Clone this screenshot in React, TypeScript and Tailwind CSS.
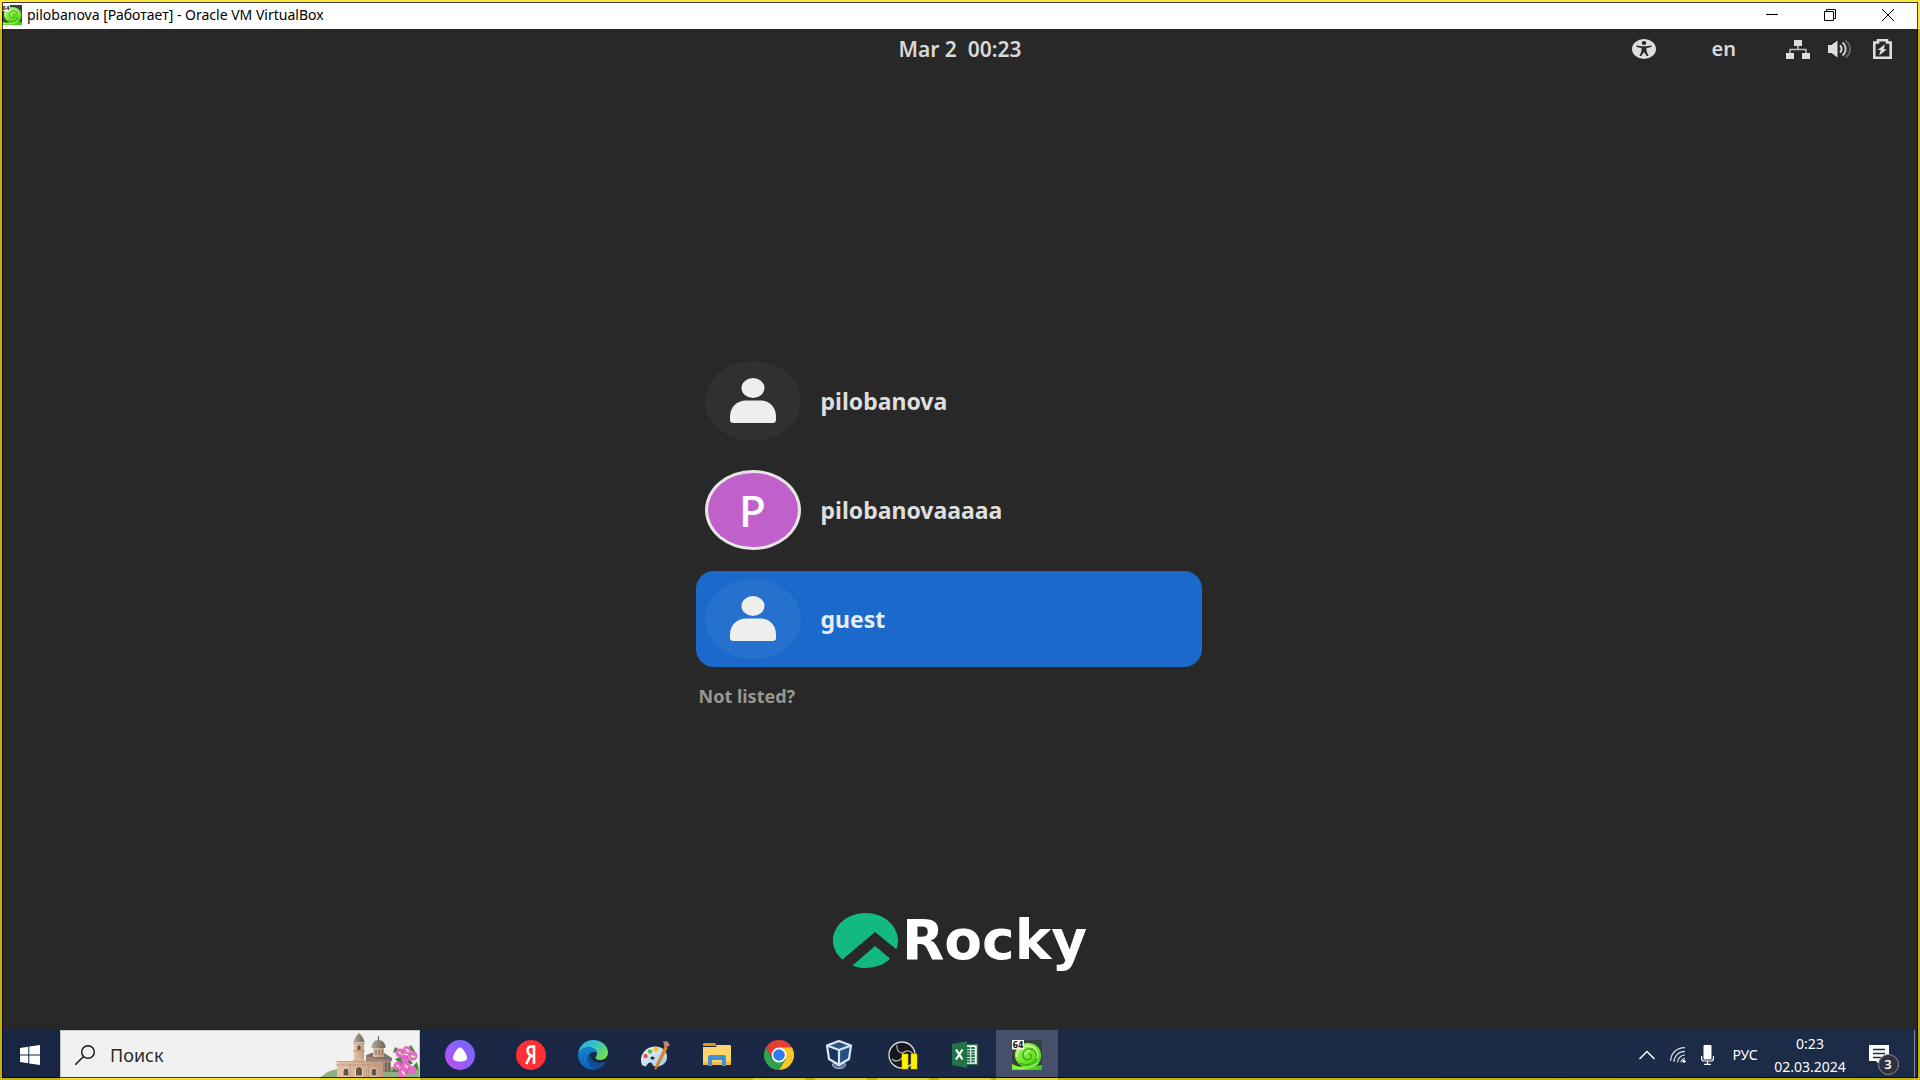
import type { ReactNode } from "react";

const UI = "font-['Noto_Sans','Open_Sans',sans-serif]";

function VmIcon({ id, className }: { id: string; className: string }) {
  return (
    <svg viewBox="0 0 30 30" className={className} aria-hidden="true">
      <defs>
        <linearGradient id={id} x1="0" y1="0" x2="1" y2="1">
          <stop offset="0" stopColor="#c4f88a" />
          <stop offset="0.5" stopColor="#72e62e" />
          <stop offset="1" stopColor="#3fc41a" />
        </linearGradient>
      </defs>
      <rect width="30" height="30" fill="#36403f" />
      <path d="M3 17C2 8 9 3 16 3c8 0 14 6 13 14-.4 4-2 7-5 9l6-1v5H0v-6c4 2 8 3 11 2-5-2-7-5-8-9Z" fill={`url(#${id})`} />
      <path d="M8 23c5 3 12 2 15-2 3-5 1-11-4-12-5-1-9 3-8 7 1 4 6 5 8 2 1-2 0-4-2-4" fill="none" stroke="#3aa81c" strokeWidth="1.300" />
      <path d="M5 17c-1-7 5-12 12-11 6 1 10 6 8 12M13 15c0-3 3-5 5-4" fill="none" stroke="#d2fb9f" strokeWidth="1.300" />
      <path d="M1 27c8 2 17 2 25-4" fill="none" stroke="#a8f060" strokeWidth="1.400" />
      <rect x="0" y="0" width="12" height="9.500" fill="#f8f8f8" />
      <text x="6" y="7.700" textAnchor="middle" fontSize="8" fontWeight="700" fontFamily="DejaVu Sans, sans-serif" fill="#222">64</text>
    </svg>
  );
}

function Person() {
  return (
    <svg viewBox="0 0 96 80" className="h-20 w-24" aria-hidden="true" fill="#eeeeec">
      <ellipse cx="48" cy="27" rx="11.500" ry="10" />
      <path d="M25 59V55.500C25 46 32 39.500 41 39.500H55C64 39.500 71 46 71 55.500V59Q71 62 67.500 62H28.500Q25 62 25 59Z" />
    </svg>
  );
}

function User({ name, selected, letter }: { name: string; selected?: boolean; letter?: string }) {
  return (
    <li>
      <button
        type="button"
        className={`flex w-full items-center gap-5 rounded-[18px] px-[9px] py-2 text-left ${selected ? "bg-[#1b6acb]" : ""}`}
      >
        {letter ? (
          <span className="flex h-20 w-24 items-center justify-center rounded-[50%] border-[3px] border-[#e6e6e4] bg-[#c061cb] text-[44px] leading-none font-medium text-white">
            {letter}
          </span>
        ) : (
          <span className={`h-20 w-24 rounded-[50%] ${selected ? "bg-[#2671ce]" : "bg-[#303030]"}`}>
            <Person />
          </span>
        )}
        <span className={`text-[23px] leading-8 font-bold ${selected ? "text-[#e8eef8]" : "text-[#dededd]"}`}>{name}</span>
      </button>
    </li>
  );
}

function TitleBar() {
  const btn = "flex h-full w-[58px] items-center justify-center";
  return (
    <header className={`flex h-[29px] shrink-0 items-center bg-white pr-[3px] pl-[2px] text-black ${UI}`}>
      <VmIcon id="vmSmall" className="mr-[5px] h-5 w-5" />
      <h1 className="flex-1 text-[14px] leading-5">pilobanova [Работает] - Oracle VM VirtualBox</h1>
      <button type="button" aria-label="Minimize" className={btn}>
        <svg width="12" height="12" viewBox="0 0 12 12" stroke="#000" aria-hidden="true"><path d="M0 5.500H12" /></svg>
      </button>
      <button type="button" aria-label="Restore" className={btn}>
        <svg width="12" height="12" viewBox="0 0 12 12" stroke="#000" fill="none" aria-hidden="true">
          <path d="M.5 2.500h9v9h-9zM2.500 2.500V.5h9v9h-2" />
        </svg>
      </button>
      <button type="button" aria-label="Close" className={btn}>
        <svg width="12" height="12" viewBox="0 0 12 12" stroke="#000" aria-hidden="true"><path d="M0 0 12 12M12 0 0 12" /></svg>
      </button>
    </header>
  );
}

function TopPanel() {
  return (
    <div className="grid h-10 shrink-0 grid-cols-3 items-center px-7 text-[20px] leading-6 font-semibold text-[#d8d8d8]">
      <time className="col-start-2 justify-self-center text-[21px] whitespace-pre">Mar 2  00:23</time>
      <div className="flex items-center justify-end">
        <button type="button" aria-label="Accessibility" className="mr-14">
          <svg width="24" height="20" viewBox="0 0 24 20" aria-hidden="true">
            <ellipse cx="12" cy="10" rx="12" ry="10" fill="#dedede" />
            <g fill="#282828">
              <ellipse cx="12" cy="4" rx="2.300" ry="1.900" />
              <path d="M4.500 6.400 10 7.200h4l5.500-.8v1.500L14.500 9v3l2 5h-1.800L12 13l-2.700 4H7.500l2-5V9l-5-1.100Z" />
            </g>
          </svg>
        </button>
        <button type="button" className="mr-[50px]">en</button>
        <button type="button" aria-label="System menu" className="flex items-center">
          <svg width="24" height="20" viewBox="0 0 24 20" className="mr-[18px]" fill="#dedede" aria-hidden="true">
            <path d="M8 1h8v6h-8zM0 14h8v6H0zM16 14h8v6h-8z" />
            <path d="M12 7v3.500M4 14v-3.500h16V14" fill="none" stroke="#bdbdbd" strokeWidth="1.500" />
          </svg>
          <svg width="24" height="20" viewBox="0 0 24 20" className="mr-[21px]" fill="none" aria-hidden="true">
            <path d="M0 6h3.500L9.500 1.500v17L3.500 14H0z" fill="#dedede" />
            <path d="M12 6.500c2.200 2 2.200 5 0 7" stroke="#dedede" strokeWidth="2" />
            <path d="M14.500 3.500c4.200 3.500 4.200 9.500 0 13" stroke="#c4c4c4" strokeWidth="2" />
            <path d="M17.500 1.500c6 4.500 6 12.500 0 17" stroke="#626262" strokeWidth="2" />
          </svg>
          <svg width="19" height="20" viewBox="0 0 19 20" fill="none" aria-hidden="true">
            <path d="M1.300 3.500H5V1.300h9v2.200h3.700v15.200H1.300z" stroke="#dedede" strokeWidth="2.600" />
            <path d="M12 5.200 4.500 11h3.300L6 16.500l8-6.300h-3.300z" fill="#dedede" />
          </svg>
        </button>
      </div>
    </div>
  );
}

function RockyLogo() {
  return (
    <div className="flex items-center justify-center gap-1">
      <svg width="65" height="55" viewBox="0 0 65 55" aria-hidden="true" fill="#13b981">
        <path d="M9.500 46.500C3.500 41.500 0 35 0 27.500 0 12.500 14.500 0 32.500 0S65 12.500 65 27.500c0 3.200-.6 6-1.700 8.700L42 19Z" />
        <path d="M19.500 52.400 42 33l15 12.500C51.500 51.500 42 55 32.500 55c-4.700 0-9-.9-13-2.600Z" />
      </svg>
      <span className="font-['DejaVu_Sans',sans-serif] text-[55px] leading-[58px] font-bold text-white">Rocky</span>
    </div>
  );
}

function SearchArt() {
  return (
    <svg width="100" height="47" viewBox="0 0 100 47" aria-hidden="true">
      <defs>
        <linearGradient id="stone" x1="0" y1="0" x2="1" y2="0">
          <stop offset="0" stopColor="#e6c4a6" /><stop offset="1" stopColor="#c39a82" />
        </linearGradient>
        <linearGradient id="dome" x1="0" y1="0" x2="1" y2="0">
          <stop offset="0" stopColor="#b3aca0" /><stop offset="1" stopColor="#6b645c" />
        </linearGradient>
      </defs>
      <path d="M0 47c10-11 23-13 42-8 24-6 44-5 58-1v9Z" fill="#8fae82" />
      <path d="M47 24h16l9 3v13H47Z" fill="#9b8677" />
      <path d="M46 24 52 21h13l8 5v3Z" fill="#7b716a" />
      <path d="M54 15h11v10H54Z" fill="url(#stone)" />
      <path d="M52.500 16c0-5 3-8 7-8s7 3 7 8Z" fill="url(#dome)" />
      <path d="M59.500 4v5M57 18v5M60 18v5M63 18v5" stroke="#80705f" strokeWidth="1.200" />
      <path d="M35 11h10v19H35Z" fill="url(#stone)" />
      <path d="M34.500 10c1-4 3-7 5.500-9 2.500 2 4.500 5 5.500 9Z" fill="url(#dome)" />
      <path d="M34 11h12M34 19h12" stroke="#b8977c" strokeWidth="1" />
      <path d="M38.500 18v-3a1.500 1.500 0 0 1 3 0v3Z" fill="#69503f" />
      <path d="M18 30h46v16H18Z" fill="url(#stone)" />
      <path d="M17 29.500h48M31 32v14M50 32v14M17 33h48M16 45.500h50" stroke="#b8937a" strokeWidth=".8" />
      <path d="M33 29l7-4 7 4Z" fill="#dcb598" />
      <path d="M24 44v-5a3 3 0 0 1 6 0v5ZM36.500 44v-6a3.500 3.500 0 0 1 7 0v6ZM52 44v-5a3 3 0 0 1 6 0v5Z" fill="#66554a" stroke="#f2d7ba" />
      <path d="M67 31v9M70 31v9" stroke="#6f5b4d" strokeWidth="1.500" />
      <g fill="#45892f">
        <path d="m74 21 2-6 5 3ZM88 17l4-4 5 8ZM72 40l5-7 5 7ZM92 36l6-6 2 8ZM76 27l10-4 8 8-8 5Z" />
      </g>
      <g fill="#e56ad0">
        <circle cx="81" cy="21" r="4.500" /><circle cx="88" cy="18" r="4" /><circle cx="94" cy="24" r="4.500" />
        <circle cx="86" cy="27" r="4" /><circle cx="79" cy="34" r="4.500" /><circle cx="87" cy="34" r="4.500" />
        <circle cx="93" cy="38" r="4" /><circle cx="84" cy="41" r="5" />
      </g>
      <path d="m80 20 3 3M87 17l3 3M92 24l4 1M78 33l3 3M86 33l3 3M83 39l3 4" stroke="#fae7a4" strokeWidth="2" />
      <path d="m84 17-3 7M91 20l-4 7M83 31l-5 7M91 34l-4 8" stroke="#c246aa" strokeWidth=".8" />
    </svg>
  );
}

const icons: { label: string; running?: boolean; active?: boolean; art: ReactNode }[] = [
  {
    label: "Yandex",
    art: (
      <svg viewBox="0 0 30 30" className="h-[30px] w-[30px]" aria-hidden="true">
        <circle cx="15" cy="15" r="15" fill="#fc3035" />
        <path d="M18 24V6.500h-2.500c-2.500 0-3.900 1.700-3.900 4.100 0 2.700 1.500 4 3.400 5.100L18 16M14.500 15.500 10.200 24" fill="none" stroke="#fff" strokeWidth="2.600" />
      </svg>
    ),
  },
  {
    label: "Edge",
    art: (
      <svg viewBox="0 0 30 30" className="h-[30px] w-[30px]" aria-hidden="true">
        <defs>
          <linearGradient id="edgeTop" x1="0" y1="0" x2="1" y2=".6">
            <stop offset="0" stopColor="#29a9dc" /><stop offset=".5" stopColor="#35c1cf" /><stop offset="1" stopColor="#6be04f" />
          </linearGradient>
          <linearGradient id="edgeLow" x1="0" y1="0" x2="0" y2="1">
            <stop offset="0" stopColor="#1383cf" /><stop offset="1" stopColor="#0c62b8" />
          </linearGradient>
        </defs>
        <path d="M0 14C1 6 7 0 15 0c9 0 15 6 15 12.500 0 5-4 7.500-8 7.500-3 0-4.500-1.200-4.500-2.300 0-1 1.500-1.500 1.500-4.200C19 10 15.500 7.500 11 7.500 6 7.500 1.500 10 0 14Z" fill="url(#edgeTop)" />
        <path d="M0 14c1-4 5.500-6.500 10.500-6.500C15.500 7.500 19 10 19 13c-1.500-1.500-6-1.500-8 1.500-3 5 1 12.500 8 14.700C10 32-.5 25 0 14Z" fill="url(#edgeLow)" />
        <path d="M12 13.500c-3 2-3.500 6-1.500 10 2 3.500 5 5.500 8.500 5.700 4-1 7-3.700 8.700-7 .3-.8-.3-1-.9-.7-6 2.800-12.500.5-14-3.500-.6-1.700-.8-3-.8-4.500Z" fill="#124c96" />
      </svg>
    ),
  },
  {
    label: "Paint",
    art: (
      <svg viewBox="0 0 30 30" className="h-[30px] w-[30px]" aria-hidden="true">
        <defs><linearGradient id="palette" x1="0" y1="0" x2="1" y2="1"><stop stopColor="#f4fbff" /><stop offset="1" stopColor="#9fc8de" /></linearGradient></defs>
        <path d="M2 25C-1 18 3 10 10 7.500c8-3 16 1 17 8 .8 7-5 12-12 11-3-.5-2-3.500-4.500-4-3-.3-3 3.500-5.500 4Z" fill="url(#palette)" />
        <ellipse cx="12.500" cy="18" rx="2" ry="1.600" fill="#1a2747" />
        <circle cx="5.500" cy="16" r="2.200" fill="#e9503e" /><circle cx="10" cy="11.500" r="2.300" fill="#5fb545" /><circle cx="16" cy="9" r="2.600" fill="#f8bd2b" />
        <path d="M25 6 14.500 29l1.700.3L27.500 8Z" fill="#e58a2c" stroke="#bd6415" strokeWidth=".6" />
        <path d="M23 1c1 .7 2 .8 4 0l3 4-5 3.500Z" fill="#b98a65" />
      </svg>
    ),
  },
  {
    label: "File Explorer",
    art: (
      <svg viewBox="0 0 30 30" className="h-[30px] w-[30px]" aria-hidden="true">
        <path d="M1 4q0-1 1-1h11l2 3H1Z" fill="#df9a05" />
        <path d="M1 7h13l1-2h13q1 0 1 1v19H1Z" fill="#ffd56a" />
        <path d="M1 22h28v3H1Z" fill="#f4b941" />
        <path d="M6 26v-9q0-2 2-2h14q2 0 2 2v9h-4v-6H10v6Z" fill="#3d91d8" />
      </svg>
    ),
  },
  {
    label: "Chrome",
    running: true,
    art: (
      <svg viewBox="0 0 30 30" className="h-[30px] w-[30px]" aria-hidden="true">
        <path d="M2 7.500A15 15 0 0 1 28 7.500L15 15Z" fill="#e53e35" />
        <path d="M28 7.500A15 15 0 0 1 15 30l6.500-11L15 7.500Z" fill="#fcc629" />
        <path d="M2 7.500A15 15 0 0 0 15 30l6.500-11.300L8.500 18.700Z" fill="#2fa14f" />
        <path d="M2 7.500h26H15l-6.500 11Z" fill="#e53e35" />
        <circle cx="15" cy="15" r="7.400" fill="#fff" /><circle cx="15" cy="15" r="5.800" fill="#2f7af0" />
      </svg>
    ),
  },
  {
    label: "VirtualBox",
    running: true,
    art: (
      <svg viewBox="2 0 30 30" className="h-[30px] w-[30px]" aria-hidden="true">
        <ellipse cx="15" cy="25" rx="6.500" ry="3.500" fill="#5d7099" stroke="#b4c3da" />
        <path d="M3 5 15 10v16L5 19Z" fill="#153663" /><path d="M27 5 15 10v16l10-7Z" fill="#245181" /><path d="M15 1 27 5 15 10 3 5Z" fill="#25577e" />
        <path d="M15 1 27 5.500 25 19 15 25 5 19 3 5.500ZM3 5.500 15 10l12-4.500M15 10v15" fill="none" stroke="#dbe4f0" strokeWidth="2.200" strokeLinejoin="round" />
      </svg>
    ),
  },
  {
    label: "OBS Studio",
    running: true,
    art: (
      <svg viewBox="0 0 30 30" className="h-[30px] w-[30px]" aria-hidden="true">
        <circle cx="14" cy="15" r="13" fill="#17171a" stroke="#dddde0" strokeWidth="1.300" />
        <path d="M9 5c-1 5 2 8 6 8 3-3 7-3 10 1M15 13c1 4-2 8-7 8-2 0-3-1-4-2M14 16c3 2 4 6 2 10" fill="none" stroke="#a9a9ad" strokeWidth="1.300" />
        <path d="M14 14h6v15h-6ZM23 14h6v15h-6Z" fill="#fff000" stroke="#d8ca00" strokeWidth=".5" />
      </svg>
    ),
  },
  {
    label: "Excel",
    running: true,
    art: (
      <svg viewBox="0 0 30 30" className="h-[30px] w-[30px]" aria-hidden="true">
        <path d="M15 4.500h12.500v20H15Z" fill="#fff" stroke="#217346" strokeWidth="1.500" />
        <path d="M18.500 7v15.500M23 7v15.500" stroke="#217346" strokeWidth="3.600" strokeDasharray="2 .7" />
        <path d="M2 4 17 1v27L2 25Z" fill="#217346" />
        <path d="m6 9.500 6.500 10M12.500 9.500 6 19.500" stroke="#fff" strokeWidth="2.200" />
      </svg>
    ),
  },
  { label: "pilobanova", running: true, active: true, art: <VmIcon id="vmLarge" className="h-[30px] w-[30px]" /> },
];

function Taskbar() {
  return (
    <footer className={`flex h-[50px] shrink-0 items-stretch bg-linear-to-r from-[#182543] to-[#1c2c48] text-white ${UI}`}>
      <button type="button" aria-label="Start" className="flex w-[60px] items-center justify-center">
        <svg width="20" height="20" viewBox="0 0 20 20" fill="#fff" aria-hidden="true">
          <path d="M0 3 8.300 1.700v7.800H0ZM9.300 1.500 20 0v9.500H9.300ZM0 10.500h8.300v7.800L0 17ZM9.300 10.500H20V20L9.300 18.500Z" />
        </svg>
      </button>
      <div className="flex w-[360px] items-center border border-[#c4c4c4] bg-[#f1f1f1] pl-[14px]">
        <svg width="20" height="20" viewBox="0 0 20 20" fill="none" stroke="#111" strokeWidth="1.400" aria-hidden="true">
          <circle cx="13" cy="7" r="6.300" /><path d="M8.500 11.500 0 20" />
        </svg>
        <input
          type="text"
          aria-label="Поиск"
          placeholder="Поиск"
          className="ml-[15px] min-w-0 flex-1 bg-transparent text-[18px] leading-6 text-black outline-none placeholder:text-[#2b2b2b]"
        />
        <SearchArt />
      </div>
      <button type="button" aria-label="Alice" className="flex w-20 items-center justify-center">
        <svg viewBox="0 0 30 30" className="h-[30px] w-[30px]" aria-hidden="true">
          <defs><linearGradient id="alice" x1="0" y1="1" x2="1" y2="0"><stop stopColor="#c04df5" /><stop offset="1" stopColor="#6a6cff" /></linearGradient></defs>
          <circle cx="15" cy="15" r="15" fill="url(#alice)" />
          <path d="M15 7.500c3 0 7 7.500 7 10.500 0 2.500-3 3.500-7 3.500s-7-1-7-3.500c0-3 4-10.500 7-10.500Z" fill="#fff" />
        </svg>
      </button>
      {icons.map((i) => (
        <button
          key={i.label}
          type="button"
          aria-label={i.label}
          className={`flex w-[62px] items-center justify-center ${i.active ? "bg-[#46506a]" : ""}`}
        >
          <span className={`flex h-full items-center justify-center border-t-2 border-b-2 border-t-transparent ${i.active ? "w-full" : "w-[52px]"} ${i.running ? "border-b-[#76b9ed]" : "border-b-transparent"}`}>
            {i.art}
          </span>
        </button>
      ))}
      <div className="ml-auto flex items-stretch">
        <button type="button" aria-label="Show hidden icons" className="flex w-8 items-center justify-center">
          <svg width="16" height="10" viewBox="0 0 16 10" fill="none" stroke="#fff" strokeWidth="1.500" aria-hidden="true"><path d="m.5 9 7.500-7.500L15.500 9" /></svg>
        </button>
        <button type="button" aria-label="Network" className="flex w-[30px] items-center justify-center">
          <svg width="16" height="16" viewBox="0 0 16 16" fill="none" stroke="#d5dae3" strokeWidth="1.200" aria-hidden="true">
            <path d="M.6 14C.6 6.500 6.500.6 15 .6M4 15C4 9 9 4.300 15 4.300M7.500 15.500c0-4 3.500-7.500 7.500-7.500M11 15.500c0-2 2-4 4-4" />
            <circle cx="14" cy="14.300" r="1.500" fill="#fff" stroke="none" />
          </svg>
        </button>
        <button type="button" aria-label="Microphone" className="flex w-7 items-center justify-center">
          <svg width="13" height="20" viewBox="0 0 13 20" fill="none" stroke="#fff" strokeWidth="1.200" aria-hidden="true">
            <rect x="2.500" y="0" width="8" height="14.500" rx="1" fill="#fff" stroke="none" />
            <path d="M.6 11v2.500q0 2.500 2.400 2.500h7q2.400 0 2.400-2.500V11M6.500 16v3.400M3 19.400h7" />
          </svg>
        </button>
        <button type="button" className="w-12 text-[14px] leading-5">РУС</button>
        <button type="button" className="flex w-[82px] flex-col items-center justify-center gap-[3px] text-[14px] leading-5">
          <span>0:23</span>
          <span>02.03.2024</span>
        </button>
        <button type="button" aria-label="Notifications, 3 new" className="flex w-[63px] items-center justify-center pr-2">
          <span className="relative">
            <svg width="20" height="20" viewBox="0 0 20 20" aria-hidden="true">
              <path d="M0 0h20v16h-9v4l-4-4H0Z" fill="#fff" /><path d="M4 4.500h12M4 8.500h12M4 12.500h8" stroke="#1b2b47" strokeWidth="1.300" />
            </svg>
            <span className="absolute top-[9px] left-[9px] flex h-[21px] w-[21px] items-center justify-center rounded-full border border-[#8c8f96] bg-[#2f323a] text-[13px] leading-none font-semibold">
              3
            </span>
          </span>
        </button>
        <button type="button" aria-label="Show desktop" className="w-[6px] border-l border-[#7d8798]" />
      </div>
    </footer>
  );
}

export default function App() {
  return (
    <div className="flex min-h-screen flex-col bg-[#282828]">
      <TitleBar />
      <main className="flex flex-1 flex-col pb-[61px] font-['Noto_Sans','Open_Sans',sans-serif]">
        <TopPanel />
        <section className="flex flex-1 flex-col items-center justify-center pt-[83px] pr-[23px]">
          <div className="w-full max-w-[506px]">
            <ul className="flex flex-col gap-[13px]">
              <User name="pilobanova" />
              <User name="pilobanovaaaaa" letter="P" />
              <User name="guest" selected />
            </ul>
            <button type="button" className="mt-[15px] ml-[3px] text-[18px] leading-7 font-bold text-[#97978f]">
              Not listed?
            </button>
          </div>
        </section>
        <RockyLogo />
      </main>
      <Taskbar />
      <div className="pointer-events-none fixed inset-0 border-2 border-[#ffdc00]/75">
        <div className="h-full w-full border border-black/75" />
      </div>
    </div>
  );
}
